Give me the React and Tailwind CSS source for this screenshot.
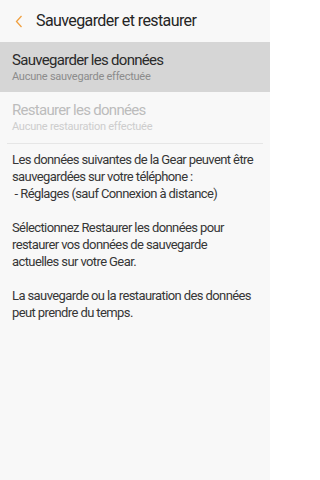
export default function App() {
  return (
    <div className="w-[270px] h-[480px] bg-[#f8f8f8] font-['Roboto',sans-serif] overflow-hidden">
      <div className="h-[42px] flex items-center">
        <div className="w-[36px] flex items-center justify-center">
          <svg width="8" height="13" viewBox="0 0 8 13" className="ml-[1px]">
            <path d="M6.5 1 L1.5 6.5 L6.5 12" fill="none" stroke="#f0a040" strokeWidth="1.3" />
          </svg>
        </div>
        <h1 className="text-[16px] text-[#252525] tracking-[-0.6px]">Sauvegarder et restaurer</h1>
      </div>

      <div className="h-[50px] bg-[#d6d6d6] px-3 flex flex-col justify-center">
        <p className="text-[15px] leading-[19px] text-[#2a2a2a] tracking-[-0.7px]">Sauvegarder les données</p>
        <p className="text-[11px] leading-[14px] text-[#8c8c8c] tracking-[-0.25px]">Aucune sauvegarde effectuée</p>
      </div>

      <div className="h-[51px] px-3 flex flex-col justify-center">
        <p className="text-[15px] leading-[19px] text-[#bcbcbc] tracking-[-0.7px]">Restaurer les données</p>
        <p className="text-[11px] leading-[14px] text-[#cdcdcd] tracking-[-0.25px]">Aucune restauration effectuée</p>
      </div>
      <div className="mx-[7px] h-px bg-[#e6e6e6]" />

      <div className="px-3 pt-[7px] text-[13px] leading-[17px] text-[#363636] tracking-[-0.6px] flex flex-col gap-[17px]">
        <p>
          Les données suivantes de la Gear peuvent être sauvegardées sur votre téléphone :
          <br />
          &nbsp;- Réglages (sauf Connexion à distance)
        </p>
        <p>
          Sélectionnez Restaurer les données pour
          <br />
          restaurer vos données de sauvegarde
          <br />
          actuelles sur votre Gear.
        </p>
        <p>
          La sauvegarde ou la restauration des données
          <br />
          peut prendre du temps.
        </p>
      </div>
    </div>
  );
}
